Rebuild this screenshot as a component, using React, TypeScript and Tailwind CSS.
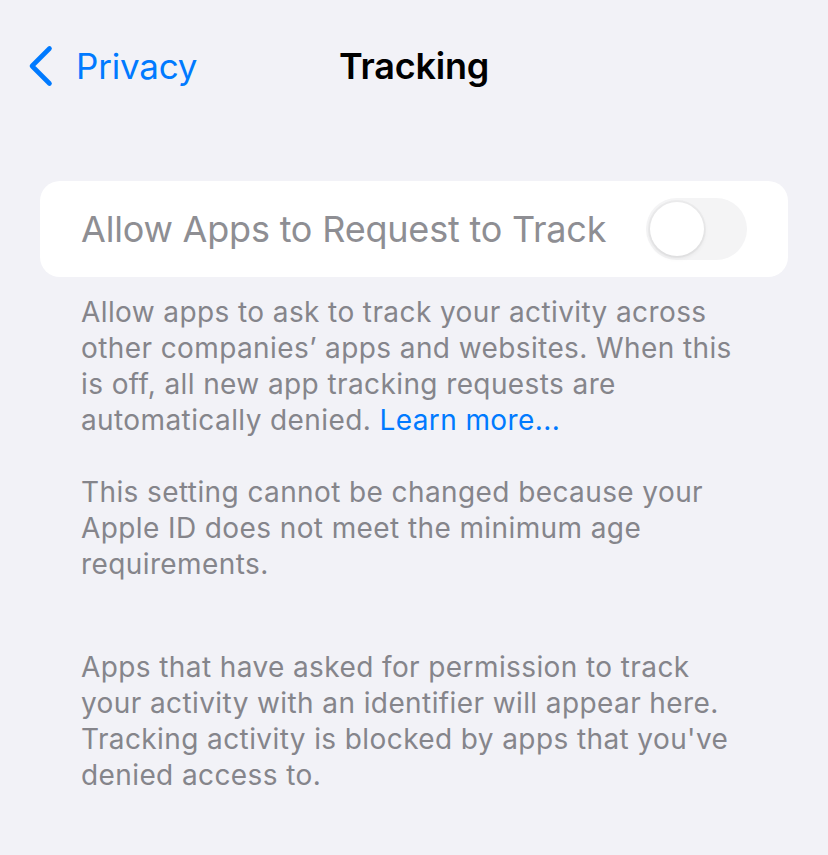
import React from "react";

export default function App() {
  return (
    <div className="w-[828px] h-[855px] bg-[#f2f2f7] font-['Inter','Noto_Sans',sans-serif] overflow-hidden">
      <div className="pt-[40px] h-[92px] grid grid-cols-[1fr_auto_1fr] items-center">
        <div className="flex items-center pl-[28px] h-[52px]">
          <svg width="25" height="42" viewBox="0 0 25 42" className="block">
            <path d="M21.5 3.5 L4 21 L21.5 38.5" fill="none" stroke="#007aff" strokeWidth="4.6" strokeLinecap="round" strokeLinejoin="round" />
          </svg>
          <span className="ml-[23px] text-[35px] leading-[52px] text-[#007aff] tracking-[-0.2px]">Privacy</span>
        </div>
        <div className="text-[36px] leading-[52px] font-semibold text-black tracking-[-0.2px]">Tracking</div>
        <div />
      </div>
      <div className="mx-[40px] mt-[89px] h-[96px] bg-white rounded-[20px] flex items-center justify-between pl-[41px] pr-[41px]">
        <span className="text-[36px] text-[#8e8e93] tracking-[-0.2px]">Allow Apps to Request to Track</span>
        <div className="w-[101px] h-[62px] rounded-full bg-[#f4f4f5] flex items-center pl-[4px]">
          <div className="w-[54px] h-[54px] rounded-full bg-white shadow-[0_0_0_2px_rgba(0,0,0,0.03),0_2px_5px_rgba(0,0,0,0.08)]" />
        </div>
      </div>
      <div className="mx-[40px] px-[41px] pt-[17px] text-[28px] leading-[36px] text-[#85858b] tracking-[0.4px] whitespace-nowrap">
        <p>
          Allow apps to ask to track your activity across
          <br />
          other companies’ apps and websites. When this
          <br />
          is off, all new app tracking requests are
          <br />
          automatically denied. <span className="text-[#007aff]">Learn more...</span>
        </p>
        <p className="mt-[36px]">
          This setting cannot be changed because your
          <br />
          Apple ID does not meet the minimum age
          <br />
          requirements.
        </p>
        <p className="mt-[67px]">
          Apps that have asked for permission to track
          <br />
          your activity with an identifier will appear here.
          <br />
          Tracking activity is blocked by apps that you've
          <br />
          denied access to.
        </p>
      </div>
    </div>
  );
}
